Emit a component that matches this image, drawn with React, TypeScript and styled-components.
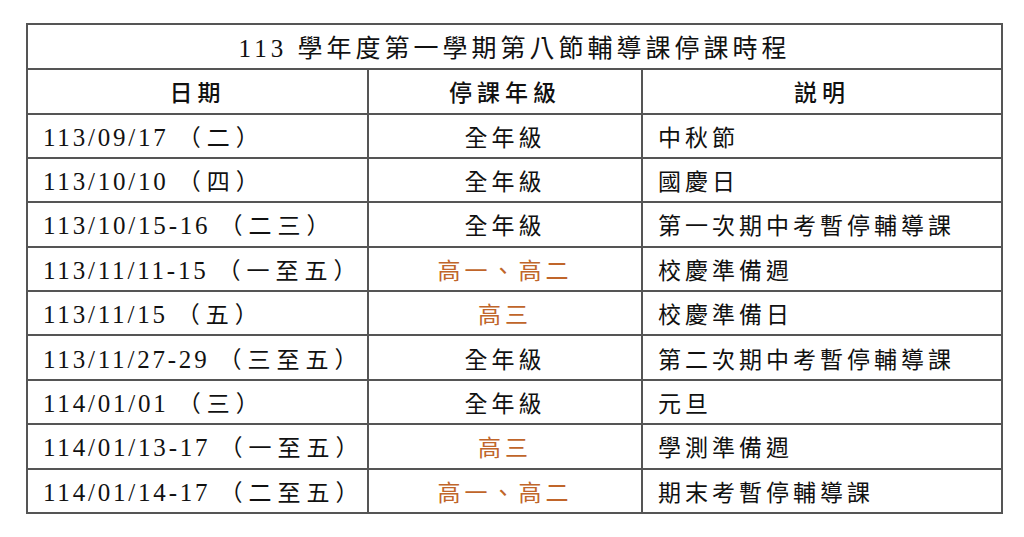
import styled, { createGlobalStyle } from 'styled-components';

const GlobalStyle = createGlobalStyle`
  body {
    margin: 0;
    background: #ffffff;
    font-family: "Liberation Serif", "Noto Sans CJK TC", serif;
  }
`;

type Row = {
  date: string;
  day: string;
  grade: string;
  note: string;
  highlight?: boolean;
};

const rows: Row[] = [
  { date: '113/09/17', day: '二', grade: '全年級', note: '中秋節' },
  { date: '113/10/10', day: '四', grade: '全年級', note: '國慶日' },
  { date: '113/10/15-16', day: '二三', grade: '全年級', note: '第一次期中考暫停輔導課' },
  { date: '113/11/11-15', day: '一至五', grade: '高一、高二', note: '校慶準備週', highlight: true },
  { date: '113/11/15', day: '五', grade: '高三', note: '校慶準備日', highlight: true },
  { date: '113/11/27-29', day: '三至五', grade: '全年級', note: '第二次期中考暫停輔導課' },
  { date: '114/01/01', day: '三', grade: '全年級', note: '元旦' },
  { date: '114/01/13-17', day: '一至五', grade: '高三', note: '學測準備週', highlight: true },
  { date: '114/01/14-17', day: '二至五', grade: '高一、高二', note: '期末考暫停輔導課', highlight: true },
];

const App = () => {
  return (
    <Page>
      <GlobalStyle />
      <Table>
        <colgroup>
          <col style={{ width: 341 }} />
          <col style={{ width: 274 }} />
          <col style={{ width: 360 }} />
        </colgroup>
        <thead>
          <tr>
            <Title colSpan={3}>113 學年度第一學期第八節輔導課停課時程</Title>
          </tr>
          <tr>
            <Head>日期</Head>
            <Head>停課年級</Head>
            <Head>説明</Head>
          </tr>
        </thead>
        <tbody>
          {rows.map((row) => (
            <tr key={row.date}>
              <DateCell>
                {row.date} <Weekday>（{row.day}）</Weekday>
              </DateCell>
              <Cell $center $orange={row.highlight}>{row.grade}</Cell>
              <Cell>{row.note}</Cell>
            </tr>
          ))}
        </tbody>
      </Table>
    </Page>
  );
};

const Page = styled.div`
  padding: 23px 0 0 26px;
`;

const Table = styled.table`
  width: 975px;
  border-collapse: collapse;
  table-layout: fixed;
  border: 2px solid #555555;
  color: #111111;
`;

const Title = styled.th`
  height: 42.5px;
  padding: 0;
  border: 2px solid #555555;
  font-size: 25px;
  font-weight: 400;
  letter-spacing: 4px;
  text-align: center;
`;

const Head = styled.th`
  height: 43px;
  padding: 0;
  border: 2px solid #555555;
  font-size: 23px;
  font-weight: 500;
  letter-spacing: 5px;
  text-align: center;
`;

const Cell = styled.td<{ $center?: boolean; $orange?: boolean }>`
  height: 42.4px;
  padding: 0 0 0 ${(p) => (p.$center ? '0' : '15px')};
  border: 2px solid #555555;
  font-size: 23px;
  letter-spacing: 4px;
  white-space: nowrap;
  text-align: ${(p) => (p.$center ? 'center' : 'left')};
  color: ${(p) => (p.$orange ? '#c0652a' : '#111111')};
`;

const DateCell = styled(Cell)`
  font-size: 25px;
  letter-spacing: 2.8px;
`;

const Weekday = styled.span`
  font-size: 23px;
  letter-spacing: 6px;
`;

export default App;
